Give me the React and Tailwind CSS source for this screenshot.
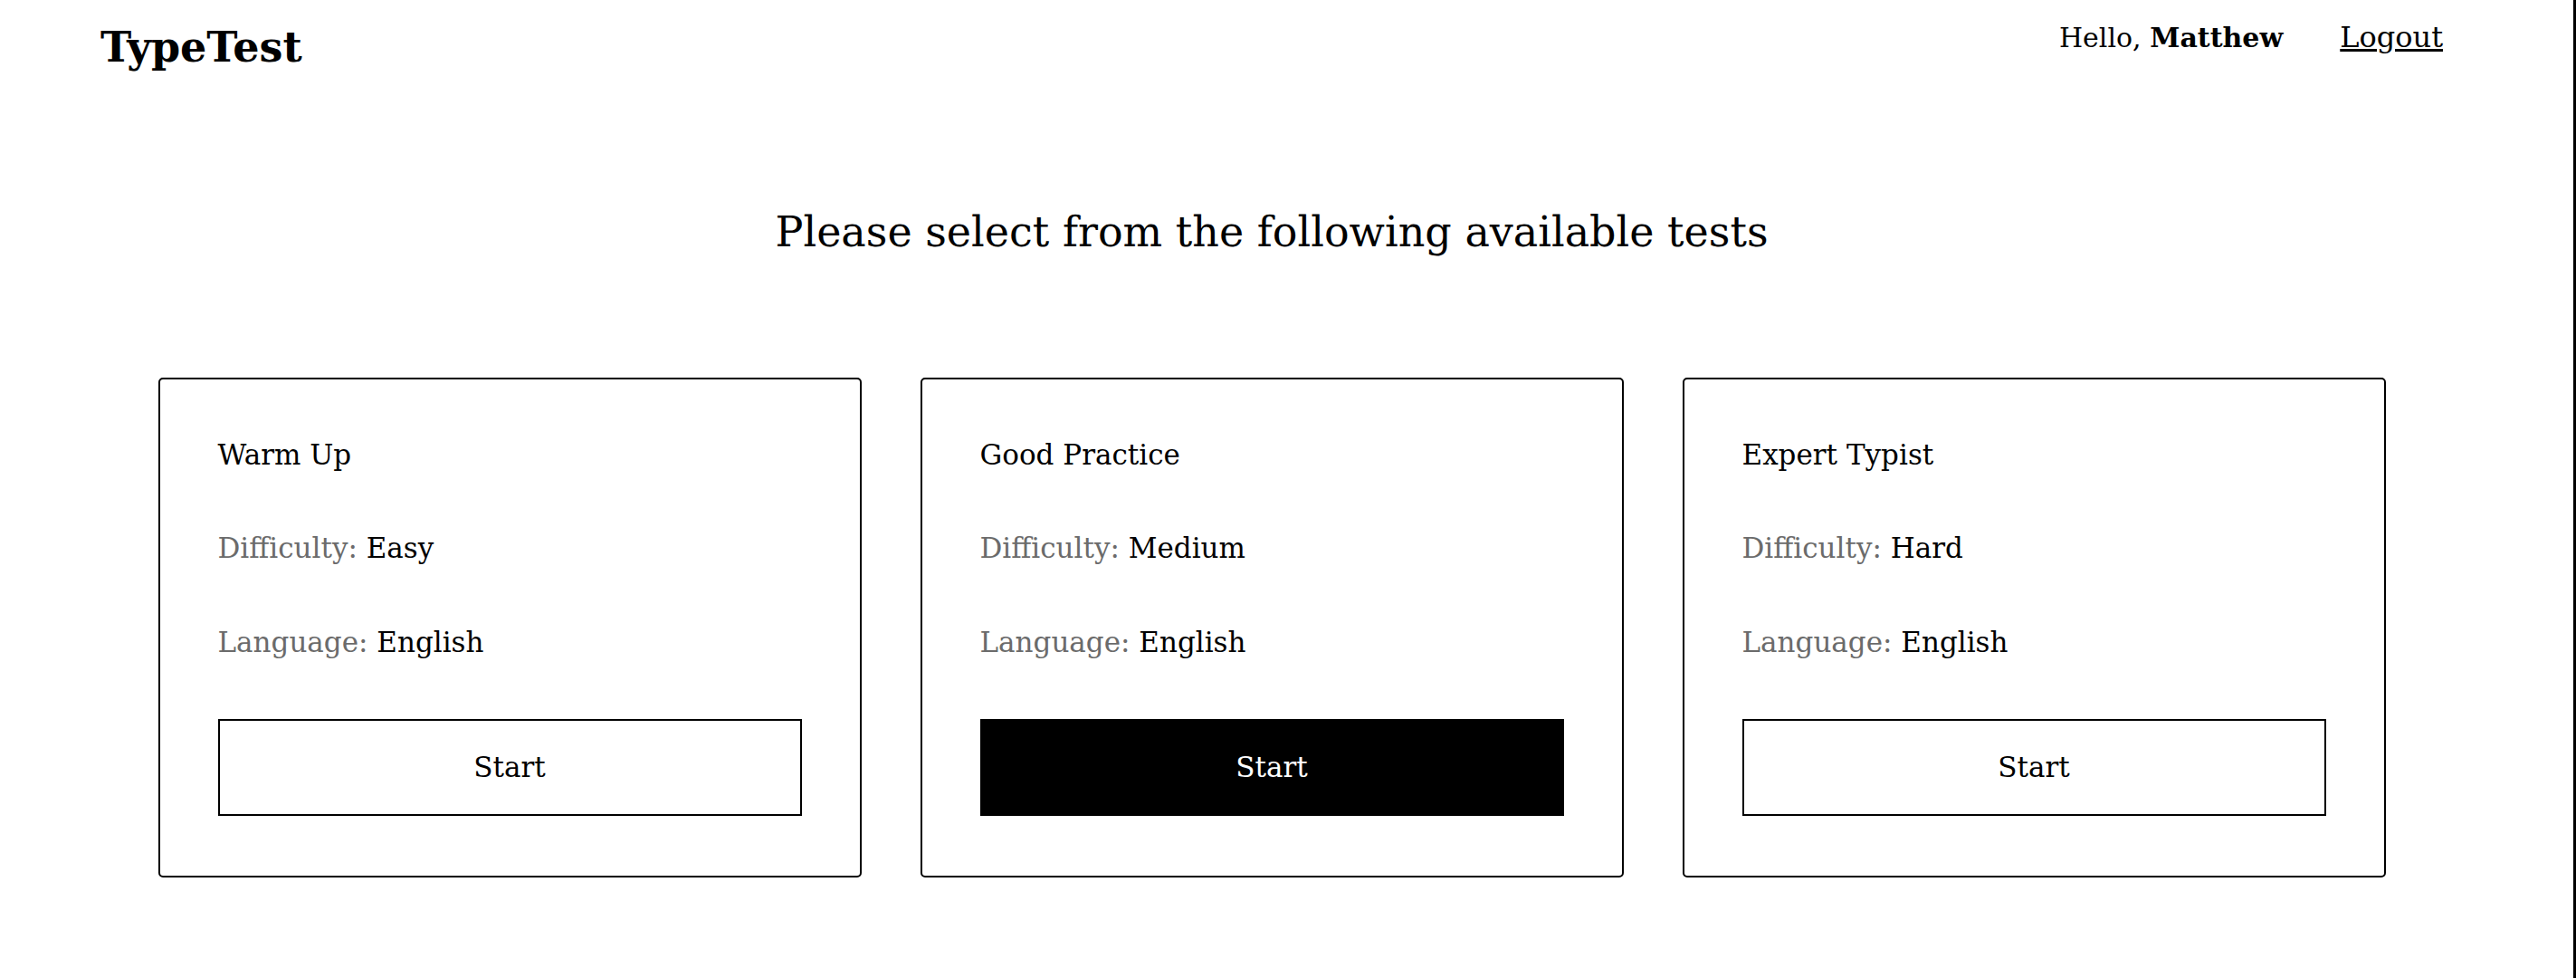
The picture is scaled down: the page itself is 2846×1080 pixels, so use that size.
import React from 'react';

const tests = [
  { title: 'Warm Up', difficulty: 'Easy', language: 'English', active: false },
  { title: 'Good Practice', difficulty: 'Medium', language: 'English', active: true },
  { title: 'Expert Typist', difficulty: 'Hard', language: 'English', active: false },
];

const TestCard = ({ test }) => (
  <div className="w-[777px] border-2 border-black rounded-[5px] px-[64px] pt-[69px] pb-[66px]">
    <h3 className="text-[31px] leading-[29px]">{test.title}</h3>
    <p className="mt-[74px] text-[31px] leading-[29px]">
      <span className="text-[#6b6b6b]">Difficulty:</span> {test.difficulty}
    </p>
    <p className="mt-[75px] text-[31px] leading-[29px]">
      <span className="text-[#6b6b6b]">Language:</span> {test.language}
    </p>
    <button
      className={
        test.active
          ? 'mt-[70px] w-full h-[107px] flex items-center justify-center bg-black text-white text-[31px] leading-none border-2 border-black'
          : 'mt-[70px] w-full h-[107px] flex items-center justify-center bg-white text-black text-[31px] leading-none border-2 border-black'
      }
    >
      Start
    </button>
  </div>
);

const App = () => {
  return (
    <div className="min-h-screen bg-white text-black font-['DejaVu_Serif',serif] pr-[33px] border-r-[3px] border-black">
      {/* Nav */}
      <nav className="flex justify-between items-start px-[111px] pt-[25px]">
        <div className="mt-[5px] text-[46px] leading-[44px] font-bold">TypeTest</div>
        <div className="flex items-baseline gap-[63px] leading-none">
          <span className="text-[30px]">
            Hello, <b className="font-bold">Matthew</b>
          </span>
          <a href="#" className="text-[32px] underline">Logout</a>
        </div>
      </nav>

      {/* Heading */}
      <h1 className="mt-[157px] text-center text-[46px] leading-[50px]">
        Please select from the following available tests
      </h1>

      {/* Cards */}
      <div className="mt-[136px] flex justify-center gap-[65px]">
        {tests.map((t) => (
          <TestCard key={t.title} test={t} />
        ))}
      </div>
    </div>
  );
};

export default App;
